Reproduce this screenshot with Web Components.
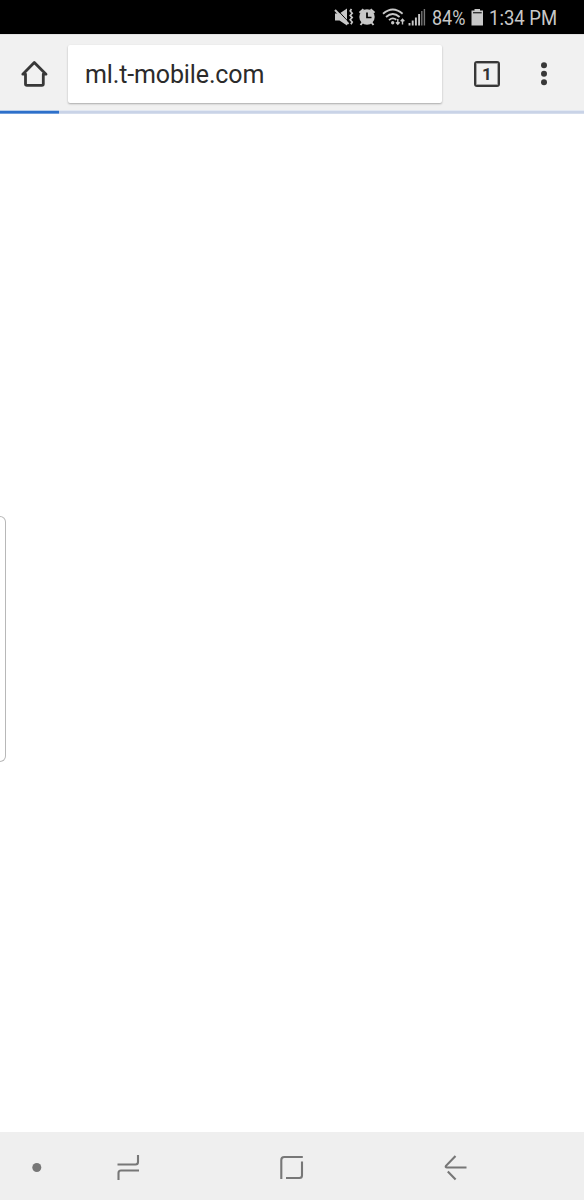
<!DOCTYPE html>
<html lang="en">
<head>
<meta charset="utf-8">
<title>ml.t-mobile.com</title>
<style>
  body {
    margin: 0;
    font-family: Roboto, "Noto Sans", sans-serif;
    background: #fff;
  }
</style>
</head>
<body>
<phone-screen>
  <status-bar slot="top" battery="84%">1:34 PM</status-bar>
  <browser-toolbar slot="top" tabs="1">ml.t-mobile.com</browser-toolbar>
  <load-progress slot="top" value="58.5"></load-progress>
  <edge-handle></edge-handle>
  <nav-bar slot="bottom"></nav-bar>
</phone-screen>

<script>
(function() {
  function makeTemplate(html) {
    const template = document.createElement("template");
    template.innerHTML = html;
    return template;
  }

  const screenTemplate = makeTemplate(`
    <style>
      :host {
        display: flex;
        flex-direction: column;
        width: 584px;
        height: 1200px;
        overflow: hidden;
      }
      main {
        flex: 1;
        display: flex;
        flex-direction: column;
        align-items: flex-start;
        padding-top: 402px;
      }
    </style>
    <slot name="top"></slot>
    <main><slot></slot></main>
    <slot name="bottom"></slot>
  `);

  const statusTemplate = makeTemplate(`
    <style>
      :host {
        display: flex;
        justify-content: flex-end;
        align-items: center;
        box-sizing: border-box;
        height: 34px;
        padding: 2px 27px 0 0;
        background: #000;
        color: #c8c8c8;
        font-size: 20px;
        line-height: 30px;
      }
      svg { display: block; flex: none; }
      .icons { margin: -2px 5px 0 0; }
      .battery { margin: -2px 5px 0 6px; }
      .text { white-space: nowrap; }
      .level { width: 33px; }
      .clock { width: 68px; }
      .text span {
        display: inline-block;
        transform-origin: 0 50%;
        transform: scaleX(.9);
      }
      .clock span { transform: scaleX(.925); }
    </style>
    <svg class="icons" width="94" height="34" viewBox="333 0 94 34" fill="none" stroke="#c8c8c8">
      <!-- muted speaker with vibration -->
      <path d="M335 13.500h4.500l7.500-5v17l-7.500-5H335z" fill="#c8c8c8" stroke="none"/>
      <path d="M336.500 9l13 14" stroke="#000" stroke-width="1"/>
      <path d="M335 10l13.500 14" stroke-width="2"/>
      <path d="M351.500 9l-1.300 2 2 2.200-2 2.200 2 2.200-2 2.200 2 2.200-1.300 2.200" stroke-width="1.700"/>
      <!-- alarm -->
      <circle cx="367" cy="17" r="7.700" fill="#c8c8c8" stroke="none"/>
      <path d="M359.500 12.800l4-3.600M374.500 12.800l-4-3.600M362.500 22.500l-2 2.500M371.500 22.500l2 2.500" stroke-width="2"/>
      <path d="M367 12.500v5h4.500" stroke="#000" stroke-width="1.700"/>
      <!-- wifi -->
      <path d="M383 13.700q9.800-8.500 19.600 0M386 17q6.800-6 13.600 0M389 20.100q3.800-3.300 7.300-.3" stroke-width="1.800"/>
      <circle cx="392.700" cy="22.700" r="1.700" fill="#c8c8c8" stroke="none"/>
      <path d="M397.800 19v5M396 22.200l1.800 2 1.800-2M402.500 24.500v-5M400.700 21.300l1.800-2 1.800 2" stroke-width="1.400"/>
      <!-- signal -->
      <path d="M409.500 25.500v-2.500M412.700 25.500v-5M415.900 25.500v-8M419.100 25.500V14" stroke-width="1.900"/>
      <path d="M421.800 25.500V11M424.400 25.500V9" stroke="#777" stroke-width="1.400"/>
    </svg>
    <div class="text level"><span id="battery"></span></div>
    <svg class="battery" width="13" height="34" viewBox="471 0 13 34">
      <path d="M474.500 9h5.500v1.500h3V25.500h-11.500V10.500h3z" fill="#c8c8c8"/>
      <path d="M473 12.700h8.700" stroke="#333" stroke-width="1.400"/>
    </svg>
    <div class="text clock"><span><slot></slot></span></div>
  `);

  const toolbarTemplate = makeTemplate(`
    <style>
      :host {
        display: flex;
        align-items: center;
        box-sizing: border-box;
        height: 76px;
        padding: 2px 33px 0 20px;
        border-top: 1px solid #e2e2e2;
        background: #f1f1f1;
        color: #333;
      }
      svg { display: block; flex: none; }
      .address {
        box-sizing: border-box;
        width: 374px;
        height: 58px;
        margin: 0 32px 0 19px;
        padding-left: 17px;
        border-radius: 2px;
        background: #fff;
        box-shadow: 0 1px 2px rgba(0, 0, 0, .3);
        color: #2b2b2b;
        font-size: 25px;
        letter-spacing: -.13px;
        line-height: 60px;
        white-space: nowrap;
      }
      .tabs {
        box-sizing: border-box;
        width: 26px;
        height: 26px;
        margin-right: 38px;
        border: 2px solid #383838;
        border-radius: 3px;
        box-shadow: inset 0 0 0 1px rgba(56, 56, 56, .4);
        font-size: 17px;
        font-weight: 700;
        line-height: 22px;
        text-align: center;
      }
    </style>
    <svg width="29" height="30" viewBox="20 59 29 30" fill="none" stroke="#383838" stroke-width="2.800" stroke-linejoin="round">
      <path d="M22.800 74.200L34.300 62.500 46 74.200H43.300V84q0 1.400-1.400 1.400H27q-1.500 0-1.500-1.400V74.200z"/>
    </svg>
    <div class="address"><slot></slot></div>
    <div class="tabs"></div>
    <svg width="12" height="26" viewBox="538 61 12 26" fill="#383838">
      <circle cx="544" cy="65.300" r="3"/>
      <circle cx="544" cy="73.800" r="3"/>
      <circle cx="544" cy="82.200" r="3"/>
    </svg>
  `);

  const progressTemplate = makeTemplate(`
    <style>
      :host {
        display: block;
        height: 4px;
        background: linear-gradient(#e2e8f2 0 1px, #c9d3e7 1px 3px, #d5ddec 3px);
      }
      div {
        height: 4px;
        background: linear-gradient(#b5cce9 0 1px, #2d70ca 1px 3px, #6f9ddb 3px);
      }
    </style>
    <div></div>
  `);

  const handleTemplate = makeTemplate(`
    <style>
      :host {
        display: block;
        box-sizing: border-box;
        width: 6px;
        height: 246px;
        border: 1px solid #b8b8b8;
        border-left: 0;
        border-radius: 0 6px 6px 0;
      }
    </style>
  `);

  const navTemplate = makeTemplate(`
    <style>
      :host {
        display: block;
        height: 68px;
        background: #efefef;
      }
      svg { display: block; }
    </style>
    <svg width="584" height="68" viewBox="0 1132 584 68" fill="none" stroke="#777" stroke-width="2.100">
      <circle cx="36.800" cy="1167.500" r="4.500" fill="#777" stroke="none"/>
      <!-- recents -->
      <path d="M117.500 1164.500h18q2.500 0 2.500-2.500v-7M139 1170.500h-18q-2.500 0-2.500 2.500v7"/>
      <!-- home -->
      <path d="M281.300 1179v-19q0-3 3-3h18.500M302 1161.500v14q0 2.500-2.500 2.500h-13.500"/>
      <!-- back -->
      <path d="M455.500 1156l-9.500 9.800q-1 1.700 1 1.700h19.500M447.800 1171.500l7.800 8"/>
    </svg>
  `);

  class BaseElement extends HTMLElement {
    constructor(template) {
      super();
      this.attachShadow({ mode: "open" });
      this.shadowRoot.appendChild(template.content.cloneNode(true));
    }
  }

  class PhoneScreen extends BaseElement {
    constructor() {
      super(screenTemplate);
    }
  }

  class StatusBar extends BaseElement {
    constructor() {
      super(statusTemplate);
    }

    connectedCallback() {
      this.shadowRoot.querySelector("#battery").textContent = this.getAttribute("battery");
    }
  }

  class BrowserToolbar extends BaseElement {
    constructor() {
      super(toolbarTemplate);
    }

    connectedCallback() {
      this.shadowRoot.querySelector(".tabs").textContent = this.getAttribute("tabs");
    }
  }

  class LoadProgress extends BaseElement {
    constructor() {
      super(progressTemplate);
    }

    connectedCallback() {
      this.shadowRoot.querySelector("div").style.width = this.getAttribute("value") + "px";
    }
  }

  class EdgeHandle extends BaseElement {
    constructor() {
      super(handleTemplate);
    }
  }

  class NavBar extends BaseElement {
    constructor() {
      super(navTemplate);
    }
  }

  customElements.define("phone-screen", PhoneScreen);
  customElements.define("status-bar", StatusBar);
  customElements.define("browser-toolbar", BrowserToolbar);
  customElements.define("load-progress", LoadProgress);
  customElements.define("edge-handle", EdgeHandle);
  customElements.define("nav-bar", NavBar);
})();
</script>
</body>
</html>
